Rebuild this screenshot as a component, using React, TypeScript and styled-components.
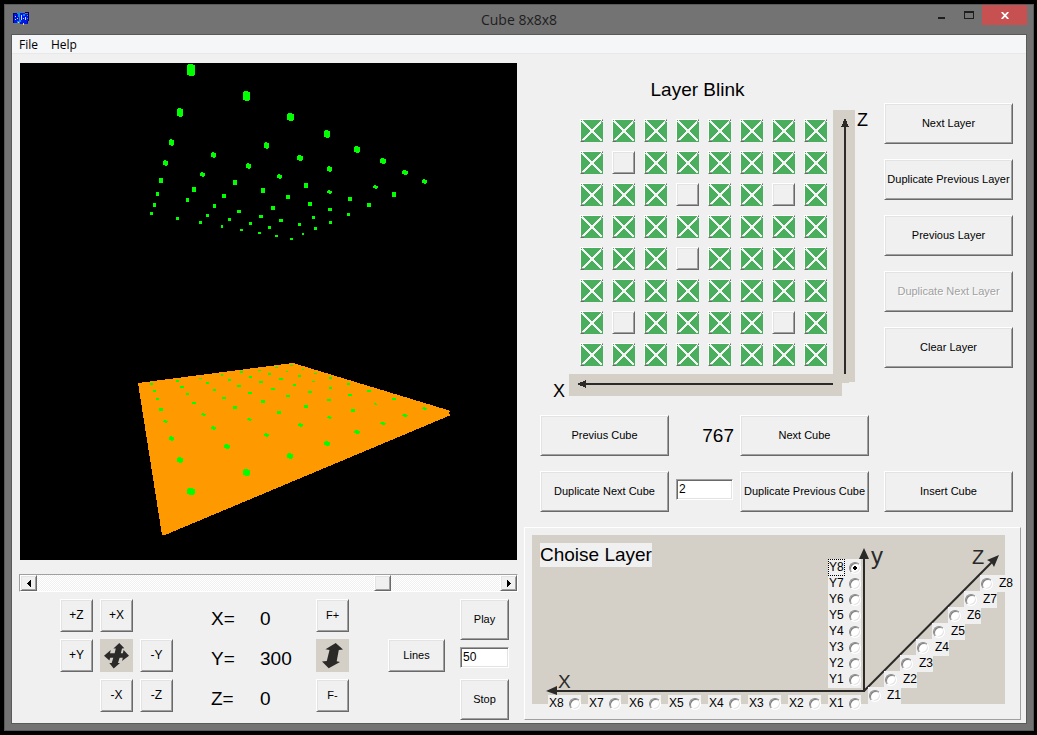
import React, { useState } from "react";
import styled, { createGlobalStyle, css } from "styled-components";

const FACE = "#f0f0f0";
const BEIGE = "#d4d0c8";
const INK = "#2b2a29";

const GlobalStyle = createGlobalStyle`
  *, *::before, *::after { box-sizing: border-box; }
  body {
    margin: 0;
    background: #000;
    color: #000;
    font-family: "Liberation Sans", Arial, sans-serif;
    font-size: 11px;
  }
  svg { display: block; }
`;

const raised = css`
  border: 1px solid;
  border-color: #fff #696969 #696969 #fff;
  box-shadow: inset 1px 1px 0 #e3e3e3, inset -1px -1px 0 #a0a0a0;
  background: ${FACE};
`;

/* Window frame */
const Window = styled.div`
  margin: 4px 3px 4px 4px;
  padding: 0 6px 6px;
  border: 1px solid #5a5a5a;
  background: #737373;
`;

const TitleBar = styled.header`
  display: grid;
  grid-template-columns: 1fr auto 1fr;
  height: 29px;
`;

const TitleIcon = styled.svg`
  margin: 7px 0 0 2px;
`;

const Title = styled.h1`
  margin: 0;
  font: 14px/29px "Open Sans", "Noto Sans", sans-serif;
  color: #1e1e1e;
`;

const WindowButtons = styled.div`
  display: flex;
  justify-content: flex-end;
  height: 20px;
`;

const WindowButton = styled.button<{ $close?: boolean }>`
  display: flex;
  align-items: center;
  justify-content: center;
  width: ${(p) => (p.$close ? 45 : 27)}px;
  padding: 0;
  border: 0;
  background: ${(p) => (p.$close ? "#c75050" : "transparent")};
`;

const Client = styled.div`
  border: 1px solid #5a5a5a;
  background: ${FACE};
`;

const MenuBar = styled.nav`
  display: flex;
  gap: 13px;
  height: 19px;
  padding-left: 7px;
  border-bottom: 1px solid #e8e8e8;
  background: #f5f6f7;
`;

const MenuItem = styled.button`
  padding: 0;
  border: 0;
  background: none;
  font: 12px/20px "Open Sans", "Noto Sans", sans-serif;
  color: #000;
`;

const Body = styled.main`
  display: grid;
  grid-template-columns: 1fr 1fr;
  align-items: start;
  gap: 7px;
  padding: 9px 5px 3px 8px;
`;

const Column = styled.section`
  min-width: 0;
`;

/* Shared controls */
const PushButton = styled.button<{ $w?: number; $h?: number; $size?: number }>`
  ${raised}
  width: ${(p) => (p.$w ? `${p.$w}px` : "100%")};
  height: ${(p) => p.$h ?? 41}px;
  padding: 0 0 1px;
  font-family: inherit;
  font-size: ${(p) => p.$size ?? 11}px;
  color: #000;
  white-space: nowrap;
  &:disabled {
    color: #a0a0a0;
    text-shadow: 1px 1px 0 #fff;
  }
`;

const TextBox = styled.input<{ $w: number }>`
  width: ${(p) => p.$w}px;
  height: 21px;
  padding: 0 2px 2px;
  border: 1px solid;
  border-color: #a0a0a0 #fff #fff #a0a0a0;
  box-shadow: inset 1px 1px 0 #696969, inset -1px -1px 0 #e3e3e3;
  background: #fff;
  font-family: inherit;
  font-size: 12px;
  color: #000;
`;

const BigText = styled.span`
  font-size: 19px;
  line-height: 24px;
`;

/* 3D view */
const Viewport = styled.svg`
  width: 100%;
  height: auto;
  background: #000;
`;

const ScrollBar = styled.div`
  display: flex;
  height: 18px;
  margin: 14px -1px 7px;
  border: 1px solid;
  border-color: #a0a0a0 #fff #fff #a0a0a0;
  background: repeating-conic-gradient(#fff 0 25%, #f0f0f0 0 50%) 0 0 / 2px 2px;
`;

const ScrollArrow = styled.button`
  ${raised}
  display: flex;
  align-items: center;
  justify-content: center;
  width: 17px;
  height: 16px;
  padding: 0;
`;

const ScrollRange = styled.input`
  flex: 1;
  min-width: 0;
  height: 16px;
  margin: 0;
  appearance: none;
  background: transparent;
  &::-webkit-slider-thumb {
    ${raised}
    appearance: none;
    width: 17px;
    height: 16px;
    border-radius: 0;
  }
`;

const Controls = styled.div`
  display: flex;
  padding-left: 40px;
`;

const MovePad = styled.div`
  display: grid;
  grid-template-columns: repeat(3, 33px);
  grid-auto-rows: 33px;
  gap: 7px;
`;

const Readout = styled.dl`
  display: grid;
  grid-template-columns: 49px 56px;
  grid-auto-rows: 40px;
  align-items: center;
  width: 105px;
  margin: 0 0 0 38px;
  font-size: 19px;
  dt, dd { margin: 0; }
`;

const Stack = styled.div<{ $gap: number; $top?: number; $left?: number }>`
  display: flex;
  flex-direction: column;
  gap: ${(p) => p.$gap}px;
  padding-top: ${(p) => p.$top ?? 0}px;
  margin-left: ${(p) => p.$left ?? 0}px;
`;

const IconTile = styled.div`
  width: 33px;
  height: 33px;
  background: ${BEIGE};
`;

/* Layer editor */
const Editor = styled.div`
  display: flex;
  justify-content: space-between;
  padding: 0 8px 0 29px;
`;

const Board = styled.div`
  display: grid;
  grid-template-columns: 16px 264px 22px 14px;
  grid-template-rows: 32px 264px 22px;
  padding-top: 15px;
`;

const BoardTitle = styled.h2`
  grid-column: 2;
  margin: 0;
  padding-right: 7px;
  font-size: 19px;
  font-weight: normal;
  line-height: 24px;
  text-align: center;
`;

const Cells = styled.div`
  grid-area: 2 / 2;
  display: grid;
  grid-template-columns: repeat(8, 23px);
  grid-auto-rows: 23px;
  gap: 9px;
  padding: 9px 0 0 11px;
`;

const Cell = styled.button`
  ${raised}
  position: relative;
  width: 23px;
  height: 23px;
  padding: 0;
  svg { position: absolute; inset: -1px; }
`;

const AxisName = styled.span<{ $area: string; $line: number; $pad?: number }>`
  grid-area: ${(p) => p.$area};
  padding-left: ${(p) => p.$pad ?? 0}px;
  font-size: 18px;
  line-height: ${(p) => p.$line}px;
`;

const AxisStrip = styled.svg<{ $area: string }>`
  grid-area: ${(p) => p.$area};
`;

const LayerButtons = styled.div`
  display: flex;
  flex-direction: column;
  gap: 15px;
  width: 129px;
  padding-top: 40px;
`;

const CubeGrid = styled.div`
  display: grid;
  grid-template-columns: 129fr 71fr 129fr 15fr 129fr;
  row-gap: 15px;
  margin: 19px 8px 15px 16px;
`;

const CubeNumber = styled(BigText)`
  align-self: center;
  padding-right: 6px;
  text-align: right;
`;

const CountCell = styled.div`
  padding-top: 8px;
  text-align: center;
`;

const InsertCell = styled.div`
  grid-column: 5;
`;

/* Layer chooser */
const Chooser = styled.div`
  padding: 7px;
  border: 1px solid;
  border-color: #fff #a0a0a0 #a0a0a0 #fff;
`;

const Diagram = styled.div`
  position: relative;
  height: 177px;
`;

const ChooserTitle = styled.h2`
  position: absolute;
  left: 8px;
  top: 8px;
  margin: 0;
  background: ${FACE};
  font-size: 19px;
  font-weight: normal;
  line-height: 24px;
  white-space: nowrap;
`;

const AxisOption = styled.label<{ $x: number; $y: number; $flip?: boolean }>`
  position: absolute;
  left: ${(p) => p.$x}px;
  top: ${(p) => p.$y}px;
  display: flex;
  flex-direction: ${(p) => (p.$flip ? "row-reverse" : "row")};
  align-items: center;
  justify-content: space-between;
  width: 33px;
  height: 17px;
  padding-left: 1px;
  background: ${FACE};
  font-size: 12px;
  line-height: 15px;
`;

const OptionText = styled.span<{ $focused?: boolean }>`
  outline: ${(p) => (p.$focused ? "1px dotted #000" : "none")};
`;

const Radio = styled.input`
  appearance: none;
  width: 12px;
  height: 12px;
  margin: 0;
  border: 1px solid;
  border-color: #8a8a8a #fff #fff #8a8a8a;
  border-radius: 50%;
  background: #fff;
  box-shadow: inset 1px 1px 0 #808080, inset -1px -1px 0 #e3e3e3;
  &:checked {
    background: radial-gradient(circle, #000 0 2px, #fff 2px);
  }
`;

type Dot = [number, number, number, number];

/* Lit LEDs of the top layer: centre x, centre y, width, height */
const TOP_DOTS: Dot[] = [
  [51, 10, 8, 12], [106, 36, 7, 10], [40, 52, 6, 9], [150, 57, 7, 8], [31, 82, 5, 7], [126, 85, 5, 7],
  [187, 74, 6, 8], [217, 89, 6, 7], [73, 95, 5, 6], [160, 98, 6, 6], [243, 101, 6, 6], [25, 103, 5, 6],
  [108, 106, 5, 6], [189, 109, 5, 6], [265, 112, 6, 5], [62, 114, 5, 5], [139, 116, 5, 5], [21, 120, 4, 5],
  [284, 121, 5, 5], [95, 122, 4, 5], [166, 125, 4, 5], [235, 127, 5, 4], [54, 129, 4, 5], [123, 130, 4, 5],
  [189, 132, 5, 4], [17, 134, 3, 4], [254, 134, 4, 5], [84, 136, 4, 4], [148, 137, 4, 4], [210, 139, 4, 4],
  [47, 140, 3, 4], [170, 144, 4, 4], [14, 145, 3, 4], [229, 145, 4, 4], [74, 146, 3, 4], [133, 148, 4, 4],
  [190, 149, 4, 3], [99, 151, 4, 3], [11, 153, 3, 3], [208, 154, 3, 3], [67, 155, 3, 3], [121, 156, 4, 3],
  [173, 157, 3, 3], [37, 158, 3, 3], [89, 159, 3, 3], [141, 160, 4, 3], [190, 162, 3, 3], [60, 162, 3, 3],
  [110, 163, 3, 3], [159, 164, 3, 3], [82, 166, 2, 3], [129, 167, 3, 3], [175, 168, 3, 3], [101, 170, 3, 2],
  [119, 173, 3, 2], [163, 174, 2, 2], [136, 176, 3, 2], [151, 179, 3, 2],
];

/* Lit LEDs of the bottom layer, lying on the platform */
const FLOOR_DOTS: Dot[] = [
  [71, 141, 8, 7], [126, 122, 7, 7], [60, 110, 6, 6], [170, 106, 6, 6], [107, 96, 6, 5], [207, 93, 6, 5],
  [51, 88, 5, 5], [146, 85, 5, 4], [237, 82, 6, 4], [93, 78, 5, 4], [180, 75, 5, 4], [45, 71, 5, 3],
  [263, 73, 6, 3], [129, 69, 5, 3], [209, 67, 5, 3], [83, 64, 5, 3], [285, 65, 6, 3], [159, 62, 4, 3],
  [233, 60, 4, 3], [41, 59, 4, 3], [304, 58, 5, 3], [115, 57, 4, 3], [186, 56, 4, 3], [74, 53, 4, 2],
  [255, 54, 5, 2], [143, 51, 4, 3], [209, 50, 4, 2], [37, 49, 3, 2], [274, 49, 4, 2], [104, 48, 4, 2],
  [168, 46, 4, 2], [67, 44, 3, 2], [230, 45, 4, 2], [130, 43, 4, 2], [190, 42, 4, 2], [34, 41, 3, 2],
  [249, 41, 4, 2], [94, 40, 3, 2], [153, 39, 4, 2], [62, 37, 4, 2], [210, 38, 3, 2], [119, 36, 4, 2],
  [174, 35, 3, 2], [31, 34, 3, 2], [228, 34, 3, 2], [87, 33, 3, 2], [141, 32, 4, 2], [57, 31, 3, 2],
  [193, 31, 3, 1], [109, 30, 3, 2], [161, 29, 4, 2], [80, 28, 3, 1], [210, 28, 3, 2], [130, 27, 3, 2],
  [179, 26, 3, 2], [102, 25, 2, 2], [149, 24, 3, 2], [121, 22, 3, 2], [195, 23, 3, 1], [167, 21, 2, 1],
  [139, 20, 3, 1], [183, 19, 2, 1], [156, 17, 3, 1], [171, 15, 3, 1],
];

const BLANK_CELLS = new Set(["1-1", "2-3", "2-6", "4-3", "6-1", "6-6"]);

/* Large LEDs are six-sided, small ones plain blocks */
const dotPath = ([cx, cy, w, h]: Dot) => {
  const x = cx - Math.floor(w / 2);
  const y = cy - Math.floor(h / 2);
  if (w < 5) return `M${x} ${y}h${w}v${h}h${-w}Z`;
  return `M${x} ${y + 1}h1v-1h${w - 3}v1h2v${h - 2}h-1v1h${3 - w}v-1h-2Z`;
};

const Dots = ({ dots, x, y }: { dots: Dot[]; x: number; y: number }) => (
  <path transform={`translate(${x} ${y})`} fill="#00ff00" d={dots.map(dotPath).join("")} />
);

const CubeView = () => (
  <Viewport viewBox="0 0 497 497" shapeRendering="crispEdges" role="img" aria-label="Cube view">
    <path d="M118 320 273 300 431 348 428 350 431 352 145 472H142Z" fill="#ff9900" />
    <Dots dots={FLOOR_DOTS} x={100} y={287} />
    <Dots dots={TOP_DOTS} x={120} y={-3} />
  </Viewport>
);

const LitMark = () => (
  <svg width="23" height="23" viewBox="0 0 23 23" shapeRendering="crispEdges">
    <path d="M1 1H22V3H23V23H4V22H1Z" fill="#4bae5f" />
    <path d="M2 2 22 22M22 2 2 22" stroke="#f5f5f5" strokeWidth="2" />
    <path d="M10 11H14V13H10ZM11 10H13V14H11Z" fill="#f5f5f5" />
    <path d="M21 2H22V4H21ZM2 21H4V22H2Z" fill="#a0a0a0" />
  </svg>
);

const AppIcon = () => (
  <TitleIcon width="17" height="14" viewBox="0 0 17 14" shapeRendering="crispEdges">
    <path d="M1 2H6V11H1ZM7 1H12V12H7ZM12 2H15V12H12Z" fill="#0018e8" />
    <path d="M4 0H8V1H4ZM5 2H7V5H5ZM4 9H7V11H4ZM10 2H12V4H10ZM6 8H8V10H6Z" fill="#0090f0" />
    <path d="M0 1H4V2H0ZM0 2H1V11H0ZM12 0H16V1H12ZM15 1H16V9H15ZM14 9H15V11H14ZM3 3H4V5H3Z" fill="#000078" />
    <path d="M2 4H3V5H2ZM2 7H3V8H2ZM4 6H5V7H4ZM8 3H9V8H8ZM12 5H13V8H12ZM10 6H11V7H10Z" fill="#c8dcff" />
    <path d="M5 10H6V11H5ZM10 11H11V13H10Z" fill="#ffe030" />
    <path d="M14 3H15V4H14ZM14 6H15V7H14Z" fill="#58a068" />
  </TitleIcon>
);

const MoveIcon = () => (
  <svg width="33" height="33" viewBox="0 0 33 33" fill={INK}>
    <path d="M19.3 4 24.3 9.3 22 9.5 20.8 14.3H22.8L23.6 11 29 16.7 22 22 22.8 18.8H19.6L18 24H20L13.7 29.5 9.3 24H11.7L13.3 18.8H10.2L9.4 21.5 4 16.7 10.8 11 10 14.3H14.6L15.8 9.5H13.4Z" />
  </svg>
);

const FlipIcon = () => (
  <svg width="33" height="33" viewBox="0 0 33 33" fill={INK}>
    <path d="M19.7 4 27 10.5 22.8 11 20.7 22.3 24 23 12.7 29.3 6 22.5 10.8 22 13.5 11 9.5 10.3Z" />
  </svg>
);

const AXES = [
  { axis: "X", x: (n: number) => 296 - (n - 1) * 40, y: () => 160 },
  { axis: "Y", x: () => 296, y: (n: number) => 136 - (n - 1) * 16 },
  { axis: "Z", x: (n: number) => 336 + (n - 1) * 16, y: (n: number) => 152 - (n - 1) * 16 },
];

const NUMBERS = [1, 2, 3, 4, 5, 6, 7, 8];

export default function App() {
  const [layer, setLayer] = useState("Y8");
  const [blank, setBlank] = useState(BLANK_CELLS);

  const toggle = (key: string) => {
    const next = new Set(blank);
    if (!next.delete(key)) next.add(key);
    setBlank(next);
  };

  return (
    <>
      <GlobalStyle />
      <Window>
        <TitleBar>
          <AppIcon />
          <Title>Cube 8x8x8</Title>
          <WindowButtons>
            <WindowButton aria-label="Minimize">
              <svg width="7" height="20" shapeRendering="crispEdges"><path d="M0 12H7V14H0Z" fill="#1e1e1e" /></svg>
            </WindowButton>
            <WindowButton aria-label="Maximize">
              <svg width="10" height="20" shapeRendering="crispEdges"><path d="M0 6H10V14H0ZM1 8V13H9V8Z" fillRule="evenodd" fill="#1e1e1e" /></svg>
            </WindowButton>
            <WindowButton $close aria-label="Close">
              <svg width="8" height="7" viewBox="0 0 8 7"><path d="M.7 0 7.3 7M7.3 0 .7 7" stroke="#fff" strokeWidth="1.8" /></svg>
            </WindowButton>
          </WindowButtons>
        </TitleBar>

        <Client>
          <MenuBar>
            <MenuItem>File</MenuItem>
            <MenuItem>Help</MenuItem>
          </MenuBar>

          <Body>
            <Column>
              <CubeView />
              <ScrollBar>
                <ScrollArrow aria-label="Rotate left">
                  <svg width="4" height="7" shapeRendering="crispEdges"><path d="M4 0V7L0 3.5Z" /></svg>
                </ScrollArrow>
                <ScrollRange type="range" min={0} max={360} defaultValue={272} aria-label="Rotation" />
                <ScrollArrow aria-label="Rotate right">
                  <svg width="4" height="7" shapeRendering="crispEdges"><path d="M0 0V7L4 3.5Z" /></svg>
                </ScrollArrow>
              </ScrollBar>

              <Controls>
                <MovePad>
                  <PushButton $h={33} $size={12}>+Z</PushButton>
                  <PushButton $h={33} $size={12}>+X</PushButton>
                  <span />
                  <PushButton $h={33} $size={12}>+Y</PushButton>
                  <IconTile><MoveIcon /></IconTile>
                  <PushButton $h={33} $size={12}>-Y</PushButton>
                  <span />
                  <PushButton $h={33} $size={12}>-X</PushButton>
                  <PushButton $h={33} $size={12}>-Z</PushButton>
                </MovePad>
                <Readout>
                  <dt>X=</dt><dd>0</dd>
                  <dt>Y=</dt><dd>300</dd>
                  <dt>Z=</dt><dd>0</dd>
                </Readout>
                <Stack $gap={7}>
                  <PushButton $w={33} $h={33}>F+</PushButton>
                  <IconTile><FlipIcon /></IconTile>
                  <PushButton $w={33} $h={33}>F-</PushButton>
                </Stack>
                <Stack $gap={0} $top={40} $left={39}>
                  <PushButton $w={57} $h={33}>Lines</PushButton>
                </Stack>
                <Stack $gap={7} $left={15}>
                  <PushButton $w={49}>Play</PushButton>
                  <TextBox $w={49} defaultValue="50" aria-label="Play delay" />
                  <Stack $gap={0} $top={4}>
                    <PushButton $w={49}>Stop</PushButton>
                  </Stack>
                </Stack>
              </Controls>
            </Column>

            <Column>
              <Editor>
                <Board>
                  <BoardTitle>Layer Blink</BoardTitle>
                  <Cells>
                    {NUMBERS.map((_, r) =>
                      NUMBERS.map((__, c) => {
                        const key = `${r}-${c}`;
                        const lit = !blank.has(key);
                        return (
                          <Cell key={key} aria-label={`Row ${r + 1} column ${c + 1}`} aria-pressed={lit} onClick={() => toggle(key)}>
                            {lit && <LitMark />}
                          </Cell>
                        );
                      })
                    )}
                  </Cells>
                  <AxisStrip $area="2 / 3" width="22" height="264" shapeRendering="crispEdges">
                    <rect width="22" height="264" fill={BEIGE} />
                    <path d="M11 16H13V264H11ZM12 8 16 17H8Z" fill={INK} />
                  </AxisStrip>
                  <AxisName $area="2 / 4" $line={20} $pad={2}>Z</AxisName>
                  <AxisName $area="3 / 1" $line={34}>X</AxisName>
                  <AxisStrip $area="3 / 2" width="264" height="22" shapeRendering="crispEdges">
                    <rect width="264" height="22" fill={BEIGE} />
                    <path d="M16 9H264V11H16ZM8 10 17 6V14Z" fill={INK} />
                  </AxisStrip>
                  <AxisStrip $area="3 / 3" width="22" height="22" shapeRendering="crispEdges">
                    <path d="M0 0H22V8H16V9H9V22H0Z" fill={BEIGE} />
                  </AxisStrip>
                </Board>
                <LayerButtons>
                  <PushButton>Next Layer</PushButton>
                  <PushButton>Duplicate Previous Layer</PushButton>
                  <PushButton>Previous Layer</PushButton>
                  <PushButton disabled>Duplicate Next Layer</PushButton>
                  <PushButton>Clear Layer</PushButton>
                </LayerButtons>
              </Editor>

              <CubeGrid>
                <PushButton>Previus Cube</PushButton>
                <CubeNumber>767</CubeNumber>
                <PushButton>Next Cube</PushButton>
                <span />
                <span />
                <PushButton>Duplicate Next Cube</PushButton>
                <CountCell><TextBox $w={57} defaultValue="2" aria-label="Copies" /></CountCell>
                <PushButton>Duplicate Previous Cube</PushButton>
                <InsertCell><PushButton>Insert Cube</PushButton></InsertCell>
              </CubeGrid>

              <Chooser>
                <Diagram>
                  <svg width="473" height="169" viewBox="0 0 473 169">
                    <rect width="473" height="169" fill={BEIGE} />
                    <g fill={INK} fontFamily="Liberation Sans, Arial, sans-serif">
                      <path d="M331 24H333V156H331ZM332 13 337 24H327Z" />
                      <path d="M24 155H333V157H24ZM14 156 25 151V160Z" />
                      <path d="M332 156 460 27" stroke={INK} strokeWidth="2" />
                      <path d="M467 20 462 32 459.500 27.500 455 25Z" />
                      <text x="26" y="153" fontSize="19">X</text>
                      <text x="339" y="29" fontSize="24">y</text>
                      <text x="440" y="29" fontSize="20">Z</text>
                    </g>
                  </svg>
                  <ChooserTitle>Choise Layer</ChooserTitle>
                  {AXES.map(({ axis, x, y }) =>
                    NUMBERS.map((n) => {
                      const name = `${axis}${n}`;
                      return (
                        <AxisOption key={name} $x={x(n)} $y={y(n)} $flip={axis === "Z"}>
                          <OptionText $focused={name === layer}>{name}</OptionText>
                          <Radio type="radio" name="layer" checked={name === layer} onChange={() => setLayer(name)} />
                        </AxisOption>
                      );
                    })
                  )}
                </Diagram>
              </Chooser>
            </Column>
          </Body>
        </Client>
      </Window>
    </>
  );
}
